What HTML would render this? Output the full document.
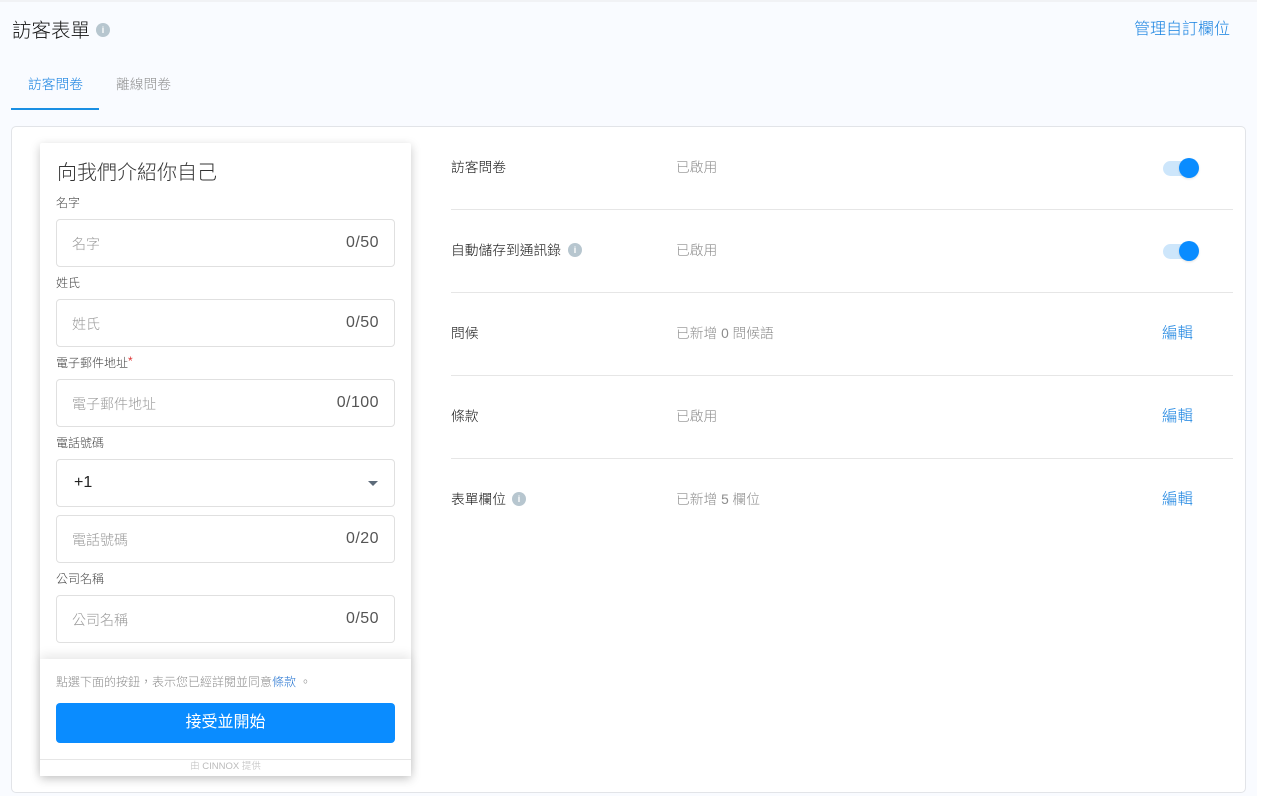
<!DOCTYPE html>
<html lang="zh-Hant"><head><meta charset="utf-8"><title>訪客表單</title>
<style>
*{box-sizing:border-box;margin:0;padding:0}
html,body{width:1279px;height:796px;overflow:hidden;background:#fff}
body{position:relative;font-family:"Liberation Sans","Noto Sans CJK TC",sans-serif;color:#333;font-weight:300}
.a{position:absolute;white-space:nowrap}
.bg{left:0;top:0;width:1257px;height:796px;background:#f9fbff}
.top{left:0;top:0;width:1257px;height:2px;background:#f1f2f5}
.card{left:11px;top:126px;width:1235px;height:667px;background:#fff;border:1px solid #e2e4e8;border-radius:5px}
.panel{left:40px;top:143px;width:371px;height:633px;background:#fff;box-shadow:0 3px 10px rgba(0,0,0,.22);border-radius:2px 2px 0 0}
.lbl{font-size:12px;line-height:16px;color:#444;left:56px}
.inp{left:56px;width:339px;height:48px;background:#fff;border:1px solid #e0e0e0;border-radius:4px}
.ph{left:72px;font-size:14px;line-height:20px;color:#999}
.cnt{font-size:16px;line-height:20px;color:#555;right:900px;letter-spacing:.45px}
.foot{left:40px;top:659px;width:371px;height:117px;background:#fff;box-shadow:0 -4px 10px rgba(0,0,0,.09)}
.btn{left:56px;top:703px;width:339px;height:40px;background:#0a8cff;border-radius:4px;color:#fff;font-size:16px;line-height:40px;text-align:center;font-weight:400}
.hr{left:451px;width:782px;height:1px;background:#e6e6e6}
.name{left:451px;font-size:13.75px;line-height:20px;color:#111}
.val{left:676px;font-size:13.75px;line-height:20px;color:#8c8c8c}
.edit{left:1162px;font-size:15.5px;line-height:20px;color:#1580e0}
.tr{left:1163px;width:30px;height:15px;background:#cde6fb;border-radius:8px}
.kn{left:1179px;width:20px;height:20px;background:#0a8cff;border-radius:50%;box-shadow:0 1px 2px rgba(0,0,0,.12)}
.i{width:14px;height:14px;border-radius:50%;background:#b7c6cf;color:#fff;font:bold 9px/14px "Liberation Sans",sans-serif;text-align:center}
</style></head><body>
<div class="a bg"></div><div class="a top"></div>
<div class="a" style="left:12px;top:18px;font-size:19.5px;line-height:27px;color:#111">訪客表單</div>
<div class="a i" style="left:96px;top:23px">i</div>
<div class="a" style="left:1134px;top:19px;font-size:16px;line-height:22px;color:#1580e0">管理自訂欄位</div>
<div class="a" style="left:28px;top:75px;font-size:13.75px;line-height:20px;color:#1580e0">訪客問卷</div>
<div class="a" style="left:116px;top:75px;font-size:13.75px;line-height:20px;color:#909090">離線問卷</div>
<div class="a" style="left:11px;top:108px;width:88px;height:2px;background:#1a8fe3"></div>
<div class="a card"></div>
<div class="a panel"></div>
<div class="a" style="left:57px;top:159px;font-size:20px;line-height:28px;color:#333">向我們介紹你自己</div>

<div class="a lbl" style="top:195px">名字</div>
<div class="a inp" style="top:219px"></div>
<div class="a ph" style="top:234px">名字</div><div class="a cnt" style="top:233px">0/50</div>

<div class="a lbl" style="top:275px">姓氏</div>
<div class="a inp" style="top:299px"></div>
<div class="a ph" style="top:314px">姓氏</div><div class="a cnt" style="top:313px">0/50</div>

<div class="a lbl" style="top:355px">電子郵件地址<span style="color:#d33;position:relative;top:-2px">*</span></div>
<div class="a inp" style="top:379px"></div>
<div class="a ph" style="top:394px">電子郵件地址</div><div class="a cnt" style="top:393px">0/100</div>

<div class="a lbl" style="top:435px">電話號碼</div>
<div class="a inp" style="top:459px"></div>
<div class="a" style="left:74px;top:473px;font-size:16px;line-height:20px;color:#222;font-weight:400">+1</div>
<div class="a" style="left:368px;top:481px;width:0;height:0;border-left:5px solid transparent;border-right:5px solid transparent;border-top:5px solid #5d6b7a"></div>

<div class="a inp" style="top:515px"></div>
<div class="a ph" style="top:530px">電話號碼</div><div class="a cnt" style="top:529px">0/20</div>

<div class="a lbl" style="top:571px">公司名稱</div>
<div class="a inp" style="top:595px"></div>
<div class="a ph" style="top:610px">公司名稱</div><div class="a cnt" style="top:609px">0/50</div>

<div class="a foot"></div>
<div class="a" style="left:56px;top:674px;font-size:12px;line-height:16px;color:#8c8c8c">點選下面的按鈕，表示您已經詳閱並同意<span style="color:#1f70d0">條款</span> 。</div>
<div class="a btn">接受並開始</div>
<div class="a" style="left:40px;top:759px;width:371px;height:1px;background:#e6e6e6"></div>
<div class="a" style="left:40px;width:371px;top:760px;font-size:9.5px;line-height:13px;color:#bbb;text-align:center">由 CINNOX 提供</div>

<div class="a name" style="top:158px">訪客問卷</div><div class="a val" style="top:158px">已啟用</div>
<div class="a tr" style="top:161px"></div><div class="a kn" style="top:158px"></div>
<div class="a hr" style="top:209px"></div>

<div class="a name" style="top:241px">自動儲存到通訊錄</div><div class="a i" style="left:568px;top:243px">i</div><div class="a val" style="top:241px">已啟用</div>
<div class="a tr" style="top:244px"></div><div class="a kn" style="top:241px"></div>
<div class="a hr" style="top:292px"></div>

<div class="a name" style="top:324px">問候</div><div class="a val" style="top:324px">已新增 0 問候語</div>
<div class="a edit" style="top:324px">編輯</div>
<div class="a hr" style="top:375px"></div>

<div class="a name" style="top:407px">條款</div><div class="a val" style="top:407px">已啟用</div>
<div class="a edit" style="top:407px">編輯</div>
<div class="a hr" style="top:458px"></div>

<div class="a name" style="top:490px">表單欄位</div><div class="a i" style="left:512px;top:492px">i</div><div class="a val" style="top:490px">已新增 5 欄位</div>
<div class="a edit" style="top:490px">編輯</div>
</body></html>
